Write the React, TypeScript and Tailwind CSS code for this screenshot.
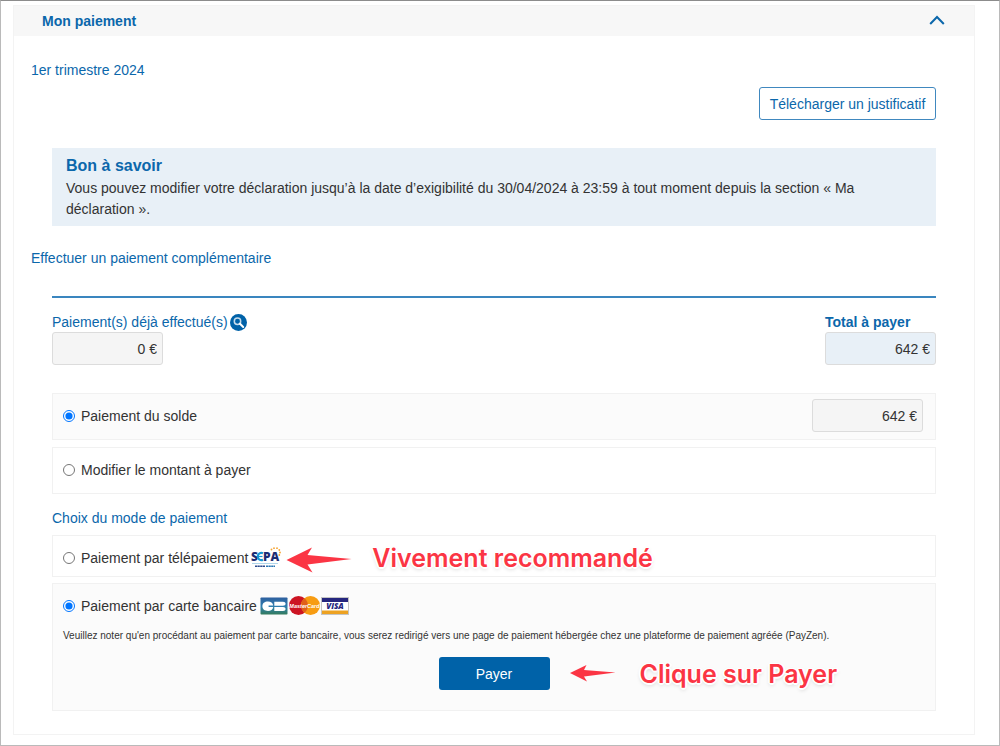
import { useState } from 'react';
import type { ReactNode } from 'react';

type AmountProps = { id: string; value: string; label?: string; className: string };

function Amount({ id, value, label, className }: AmountProps) {
  return (
    <input
      id={id}
      type="text"
      readOnly
      value={value}
      aria-label={label}
      className={`h-[33px] w-[111px] rounded-[3px] border border-[#dcdcdc] px-[5px] text-right text-[#333] outline-none ${className}`}
    />
  );
}

type RadioProps = {
  id: string;
  name: string;
  checked: boolean;
  onChange: () => void;
  children: ReactNode;
};

function Radio({ id, name, checked, onChange, children }: RadioProps) {
  return (
    <div className="flex items-center">
      <input
        id={id}
        name={name}
        type="radio"
        checked={checked}
        onChange={onChange}
        className="size-3 accent-[#0075ff]"
      />
      <label htmlFor={id} className="ml-[6px] whitespace-nowrap">
        {children}
      </label>
    </div>
  );
}

function SepaLogo() {
  return (
    <svg width="30" height="22" viewBox="0 0 30 22" className="ml-[3px] shrink-0">
      <g fontFamily="Open Sans, sans-serif" fontWeight="800" fontSize="12" fill="#1c2c73">
        <text x="0" y="14">S</text>
        <text x="12" y="14">PA</text>
      </g>
      <path d="M12 6.300a3.600 3.600 0 1 0 0 6.400" fill="none" stroke="#1596d4" strokeWidth="2.2" />
      <path d="M7 9.500h4.500" stroke="#1596d4" strokeWidth="1.200" />
      <path d="M1 16.500h26" stroke="#9ccbe6" strokeWidth="0.8" />
      <path d="M4 19.300h10" stroke="#2c4c8e" strokeWidth="1.600" strokeDasharray="2.2 0.4" />
      <path d="M15 19.300h9" stroke="#2a78b5" strokeWidth="1.600" strokeDasharray="2.2 0.4" />
      <g fill="#f5a432">
        <circle cx="20.500" cy="2.500" r="0.9" />
        <circle cx="23" cy="1.200" r="0.9" />
        <circle cx="26" cy="1.200" r="0.9" />
        <circle cx="28.300" cy="3" r="0.9" />
        <circle cx="29" cy="5.500" r="0.9" />
        <circle cx="28.300" cy="8" r="0.9" />
      </g>
    </svg>
  );
}

function CardLogos() {
  return (
    <svg width="90" height="20" viewBox="0 0 90 20" className="ml-[3px] shrink-0">
      <defs>
        <linearGradient id="cb" x1="0" y1="0" x2="0" y2="1">
          <stop offset="0" stopColor="#2e5f9f" />
          <stop offset="0.55" stopColor="#2f7fae" />
          <stop offset="1" stopColor="#347c5c" />
        </linearGradient>
      </defs>
      <rect x="0.500" y="1.500" width="27" height="17" rx="0.8" fill="url(#cb)" />
      <path
        d="M13.200 9.600H8.600v1.300h4.600c-.3 2.600-2.400 4-5.200 4-3.400 0-5.600-1.800-5.600-4.700S4.600 5.600 8 5.600c2.800 0 4.900 1.400 5.200 4z"
        fill="#fff"
      />
      <path
        d="M14.300 5.700h8.700c1.500 0 2.600.8 2.600 2s-1.100 2-2.600 2h-8.700zM14.300 10.900h8.700c1.500 0 2.600.8 2.600 2s-1.100 2-2.600 2h-8.700z"
        fill="#fff"
      />
      <circle cx="38.500" cy="9.500" r="9.500" fill="#cc1423" />
      <circle cx="50.500" cy="9.500" r="9.500" fill="#f79c12" />
      <path d="M44.500 2.200a9.500 9.500 0 0 1 0 14.600 9.500 9.500 0 0 1 0-14.600" fill="#e0601a" />
      <text
        x="44.500"
        y="11.800"
        textAnchor="middle"
        fontFamily="Liberation Sans, sans-serif"
        fontSize="5.500"
        fontWeight="700"
        fontStyle="italic"
        fill="#fff"
      >
        MasterCard
      </text>
      <rect x="61.500" y="1.500" width="27" height="17" fill="#fff" stroke="#c4c4c4" />
      <path d="M62 2h26v4H62z" fill="#25267e" />
      <path d="M62 14.500h26V18H62z" fill="#eda222" />
      <text
        x="75"
        y="13.300"
        textAnchor="middle"
        fontFamily="Open Sans, sans-serif"
        fontSize="8"
        fontWeight="800"
        fontStyle="italic"
        fill="#25267e"
      >
        VISA
      </text>
    </svg>
  );
}

function Note({ children, className }: { children: string; className: string }) {
  return (
    <strong
      className={`font-['Inter',sans-serif] text-[25px] leading-8 font-semibold whitespace-nowrap text-[#fb3544] [text-shadow:1px_1px_0_#fff,-1px_1px_0_#fff,1px_-1px_0_#fff,-1px_-1px_0_#fff,0_2px_0_#fff,2px_0_0_#fff,-2px_0_0_#fff,0_2px_4px_rgba(0,0,0,0.2)] ${className}`}
    >
      {children}
    </strong>
  );
}

export default function App() {
  const [amount, setAmount] = useState('solde');
  const [mode, setMode] = useState('carte');

  return (
    <div className="border border-[#bababa] border-t-[#8c8c8c] bg-white pt-1 pr-6 pb-[10px] pl-3 font-['Liberation_Sans',Arial,sans-serif] text-[14px] leading-5 text-[#333]">
      <main className="border border-[#f3f3f3] pb-[23px]">
        <header className="flex h-[30px] items-center justify-between bg-[#f7f7f7] pr-[29px] pl-7">
          <h1 className="font-bold text-[#0b67ab]">Mon paiement</h1>
          <button type="button" aria-label="Replier" className="text-[#0b67ab]">
            <svg width="16" height="12" viewBox="0 0 16 12" fill="none" className="block">
              <path d="M1.200 9 8 2l6.800 7" stroke="currentColor" strokeWidth="2" />
            </svg>
          </button>
        </header>

        <h2 className="mt-6 ml-[17px] text-[#0b67ab]">1er trimestre 2024</h2>

        <div className="mt-[7px] flex justify-end px-[38px]">
          <button
            type="button"
            className="h-[33px] w-[177px] rounded-[3px] border border-[#4088bf] whitespace-nowrap text-[#0b67ab]"
          >
            Télécharger un justificatif
          </button>
        </div>

        <section className="mx-[38px] mt-7 bg-[#e8f0f7] px-[14px] pt-2 pb-[6px]">
          <h3 className="text-[16px] leading-5 font-bold text-[#0b67ab]">Bon à savoir</h3>
          <p className="mt-[2px] leading-[21px]">
            Vous pouvez modifier votre déclaration jusqu’à la date d’exigibilité du 30/04/2024 à
            23:59 à tout moment depuis la section « Ma déclaration ».
          </p>
        </section>

        <h2 className="mt-[22px] ml-[17px] text-[#0b67ab]">Effectuer un paiement complémentaire</h2>

        <form className="mx-[38px]" onSubmit={(e) => e.preventDefault()}>
          <div className="mt-7 flex justify-between border-t-2 border-[#3a86bf] pt-[14px]">
            <div>
              <div className="flex h-5 items-center gap-[2px] text-[#0b67ab]">
                <label htmlFor="deja">Paiement(s) déjà effectué(s)</label>
                <button type="button" aria-label="Voir les paiements">
                  <svg width="17" height="17" viewBox="0 0 17 17" fill="none" className="block">
                    <circle cx="8.500" cy="8.500" r="8.500" fill="#0062a8" />
                    <circle cx="7.500" cy="7.300" r="3.200" stroke="#c6dcec" strokeWidth="1.500" />
                    <path d="m10 9.800 3.200 3.200" stroke="#fff" strokeWidth="2" strokeLinecap="round" />
                  </svg>
                </button>
              </div>
              <Amount id="deja" value="0 €" className="block bg-[#f5f5f5]" />
            </div>
            <div>
              <label htmlFor="total" className="block font-bold text-[#0b67ab]">
                Total à payer
              </label>
              <Amount id="total" value="642 €" className="block bg-[#e8f0f7]" />
            </div>
          </div>

          <div className="mt-7 flex h-[47px] items-center justify-between border border-[#f1f1f1] bg-[#fbfbfb] pr-3 pb-[2px] pl-[10px]">
            <Radio id="solde" name="montant" checked={amount === 'solde'} onChange={() => setAmount('solde')}>
              Paiement du solde
            </Radio>
            <Amount id="montant-solde" label="Montant du solde" value="642 €" className="bg-[#f5f5f5]" />
          </div>
          <div className="mt-[7px] flex h-[47px] items-center border border-[#f1f1f1] pb-[2px] pl-[10px]">
            <Radio id="modifier" name="montant" checked={amount === 'autre'} onChange={() => setAmount('autre')}>
              Modifier le montant à payer
            </Radio>
          </div>

          <h3 className="mt-[14px] text-[#0b67ab]">Choix du mode de paiement</h3>

          <div className="mt-[7px] flex h-[42px] items-center border border-[#f1f1f1] pt-1 pl-[10px]">
            <Radio id="sepa" name="mode" checked={mode === 'sepa'} onChange={() => setMode('sepa')}>
              Paiement par télépaiement
            </Radio>
            <SepaLogo />
            <svg width="66" height="26" viewBox="0 0 66 26" className="mt-1 ml-[5px] shrink-0">
              <path d="M0.500 13 26 0.500 21.500 8 65.500 12 21.500 17.500 26.500 25.500z" fill="#fb3544" />
            </svg>
            <Note className="ml-5">Vivement recommandé</Note>
          </div>

          <div className="mt-[6px] border border-[#f1f1f1] bg-[#fbfbfb] px-[10px] pt-3 pb-5">
            <div className="flex h-5 items-center">
              <Radio id="carte" name="mode" checked={mode === 'carte'} onChange={() => setMode('carte')}>
                Paiement par carte bancaire
              </Radio>
              <CardLogos />
            </div>
            <p className="mt-3 text-[10px] leading-4">
              Veuillez noter qu'en procédant au paiement par carte bancaire, vous serez redirigé vers
              une page de paiement hébergée chez une plateforme de paiement agréée (PayZen).
            </p>
            <div className="mt-[13px] grid h-[33px] grid-cols-[1fr_111px_1fr] items-center">
              <button type="submit" className="col-start-2 h-[33px] rounded-[3px] bg-[#0062a8] text-white">
                Payer
              </button>
              <div className="flex items-center pl-5">
                <svg width="46" height="18" viewBox="0 0 46 18" className="shrink-0">
                  <path d="M0 8 16.500 0 14 5 45.500 7.500 14 11.500 17 16.500z" fill="#fb3544" />
                </svg>
                <Note className="ml-6">Clique sur Payer</Note>
              </div>
            </div>
          </div>
        </form>
      </main>
    </div>
  );
}
